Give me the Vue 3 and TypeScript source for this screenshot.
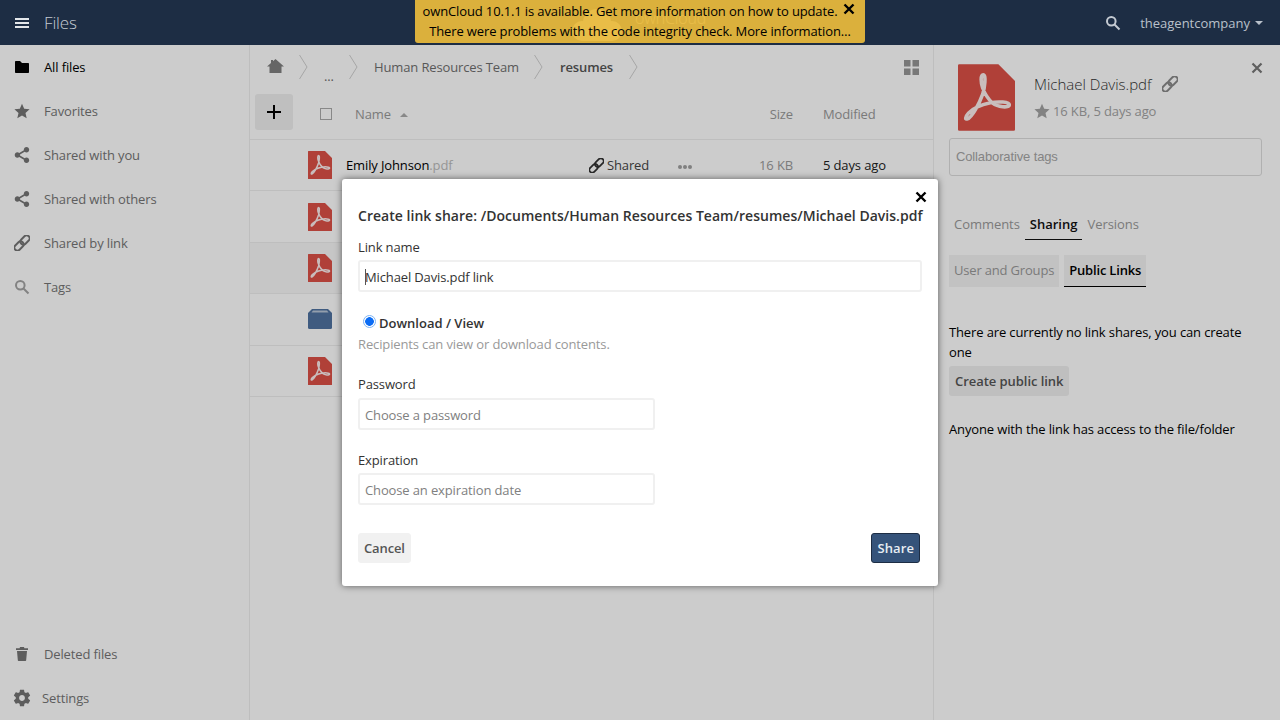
<script setup lang="ts">
const icons = {
  folder: 'M1 2.800C1 2.300 1.300 2 1.800 2H6L8 4H14.200c.5 0 .8.3.8.8V13.200c0 .5-.3.8-.8.8H1.800c-.5 0-.8-.3-.8-.8z',
  star: 'M8 .8l2.2 5 5.4.5-4.1 3.6 1.2 5.3L8 12.4l-4.7 2.8 1.2-5.3L.4 6.3l5.4-.5z',
  share:
    'M12.5 10.6c-.7 0-1.3.2-1.8.7L6 8.6c.1-.2.1-.4.1-.6s0-.4-.1-.6l4.7-2.7c.5.4 1.1.7 1.8.7C14 5.4 15.2 4.2 15.2 2.700S14 0 12.500 0 9.800 1.200 9.800 2.700c0 .2 0 .4.100.6L5.200 6c-.5-.4-1.100-.7-1.800-.7C1.900 5.300.7 6.500.7 8s1.200 2.700 2.700 2.700c.7 0 1.300-.3 1.800-.7l4.700 2.700c-.1.200-.1.400-.1.600 0 1.500 1.200 2.700 2.700 2.700s2.700-1.200 2.700-2.700-1.200-2.700-2.700-2.700z',
  trash: 'M6 1h4l.4 1.200H14V4H2V2.200h3.600zM3 5h10l-.8 9c0 .6-.5 1-1 1H4.800c-.5 0-1-.4-1-1z',
  gear: 'M19.43 12.98c.04-.32.07-.64.07-.98s-.03-.66-.07-.98l2.11-1.65c.19-.15.24-.42.12-.64l-2-3.46c-.12-.22-.39-.3-.61-.22l-2.49 1c-.52-.4-1.08-.73-1.69-.98l-.38-2.65C14.46 2.18 14.25 2 14 2h-4c-.25 0-.46.18-.49.42l-.38 2.65c-.61.25-1.17.59-1.69.98l-2.49-1c-.23-.09-.49 0-.61.22l-2 3.46c-.13.22-.07.49.12.64l2.11 1.65c-.04.32-.07.65-.07.98s.03.66.07.98l-2.11 1.65c-.19.15-.24.42-.12.64l2 3.46c.12.22.39.3.61.22l2.49-1c.52.4 1.08.73 1.69.98l.38 2.65c.03.24.24.42.49.42h4c.25 0 .46-.18.49-.42l.38-2.65c.61-.25 1.17-.59 1.69-.98l2.49 1c.23.09.49 0 .61-.22l2-3.46c.12-.22.07-.49-.12-.64l-2.11-1.65zM12 15.5c-1.93 0-3.5-1.57-3.5-3.5s1.57-3.5 3.5-3.5 3.5 1.57 3.5 3.5-1.57 3.5-3.5 3.5z',
}

const topNav = [
  { label: 'All files', icon: 'folder', active: true },
  { label: 'Favorites', icon: 'star' },
  { label: 'Shared with you', icon: 'share' },
  { label: 'Shared with others', icon: 'share' },
  { label: 'Shared by link', icon: 'link' },
  { label: 'Tags', icon: 'search' },
]

// only the first row's text is visible, the others sit behind the dialog
const rows = [
  { id: 1, kind: 'pdf' },
  { id: 2, kind: 'pdf' },
  { id: 3, kind: 'pdf', selected: true },
  { id: 4, kind: 'folder' },
  { id: 5, kind: 'pdf' },
]

const acrobat =
  'M10.6 4.400C9.400 4.400 9.600 8 10.400 10C11.400 12.800 12.600 14.600 14.600 16.400C16.600 18 21.600 18.600 21.600 17C21.600 15.800 17 15.600 13.600 16.200C9.800 17 6.400 18.400 4.400 20.600C2.800 22.400 3 23.400 4 23C5.800 22.400 9 16.600 10.400 12.600C11.200 10 12 4.400 10.600 4.400Z'
</script>

<template>
  <div class="page">
    <header class="topbar">
      <div class="brand">
        <svg class="burger" width="14" height="10" viewBox="0 0 14 10">
          <path d="M0 0h14v2H0zM0 4h14v2H0zM0 8h14v2H0z" />
        </svg>
        <span class="app-name">Files</span>
      </div>
      <div class="logo">
        <svg width="54" height="32" viewBox="0 0 54 32">
          <circle cx="27" cy="14" r="14" />
          <circle cx="12" cy="22" r="10" />
          <circle cx="42" cy="22" r="10" />
          <rect x="12" y="20" width="30" height="12" />
        </svg>
        <span>ownCloud</span>
      </div>
      <div class="notes">
        <div class="note-line">
          ownCloud 10.1.1 is available. Get more information on how to update.
          <svg class="note-close" width="12" height="12" viewBox="0 0 12 12">
            <path d="M1.500 1.500l9 9M10.500 1.500l-9 9" />
          </svg>
        </div>
        <div class="note-line">There were problems with the code integrity check. More information…</div>
      </div>
      <div class="user-area">
        <svg class="head-search" width="16" height="16" viewBox="0 0 16 16">
          <circle cx="6.300" cy="6.300" r="4.300" />
          <path d="M9.500 9.500L14.500 14.500" />
        </svg>
        <span class="user-name">theagentcompany</span>
        <span class="caret"></span>
      </div>
    </header>

    <div class="body">
      <nav class="sidebar">
        <a v-for="item in topNav" :key="item.label" class="nav-item" :class="{ active: item.active }">
          <svg v-if="item.icon === 'link'" class="nav-icon link-ic" width="16" height="16" viewBox="0 0 16 16">
            <g transform="rotate(-45 8 8)">
              <rect x="-1.500" y="5" width="10.500" height="6" rx="3" />
              <rect x="7" y="5" width="10.500" height="6" rx="3" />
            </g>
          </svg>
          <svg v-else-if="item.icon === 'search'" class="nav-icon search-ic" width="16" height="16" viewBox="0 0 16 16">
            <circle cx="6.300" cy="6.300" r="4.300" />
            <path d="M9.500 9.500L14.500 14.500" />
          </svg>
          <svg v-else class="nav-icon" width="16" height="16" viewBox="0 0 16 16">
            <path :d="icons[item.icon as keyof typeof icons]" />
          </svg>
          <span>{{ item.label }}</span>
        </a>
        <a class="nav-item bottom">
          <svg class="nav-icon" width="16" height="16" viewBox="0 0 16 16"><path :d="icons.trash" /></svg>
          <span>Deleted files</span>
        </a>
        <a class="nav-item settings">
          <svg class="nav-icon gear" width="20" height="20" viewBox="0 0 24 24"><path :d="icons.gear" /></svg>
          <span>Settings</span>
        </a>
      </nav>

      <main class="content">
        <div class="crumbs">
          <svg class="home" width="17" height="16" viewBox="0 0 17 16">
            <path d="M8.500 1L17 8.500h-2.500V15h-12V8.500H0L4 5V2h2v1.200z" />
          </svg>
          <svg class="chev c1" width="9" height="24" viewBox="0 0 9 24"><path d="M.5 0L8 12 .5 24" /></svg>
          <span class="dots-crumb">...</span>
          <svg class="chev" width="9" height="24" viewBox="0 0 9 24"><path d="M.5 0L8 12 .5 24" /></svg>
          <span class="crumb">Human Resources Team</span>
          <svg class="chev" width="9" height="24" viewBox="0 0 9 24"><path d="M.5 0L8 12 .5 24" /></svg>
          <span class="crumb current">resumes</span>
          <svg class="chev" width="9" height="24" viewBox="0 0 9 24"><path d="M.5 0L8 12 .5 24" /></svg>
          <svg class="view-toggle" width="15" height="15" viewBox="0 0 15 15">
            <path d="M0 0h6.500v6.500H0zM8.500 0H15v6.500H8.500zM0 8.500h6.500V15H0zM8.500 8.500H15V15H8.500z" />
          </svg>
        </div>

        <div class="thead">
          <button class="add" type="button">
            <svg width="14" height="14" viewBox="0 0 14 14"><path d="M6 0h2v6h6v2H8v6H6V8H0V6h6z" /></svg>
          </button>
          <span class="check"></span>
          <span class="th-name">Name<i class="sort"></i></span>
          <span class="th-size">Size</span>
          <span class="th-date">Modified</span>
        </div>

        <div v-for="row in rows" :key="row.id" class="row" :class="{ selected: row.selected }">
          <svg v-if="row.kind === 'pdf'" class="file-ic" width="24" height="28" viewBox="0 0 24 28">
            <path class="pdf-bg" d="M.5 0H17L24 7V27.500a.5.5 0 0 1-.5.5H.5a.5.5 0 0 1-.5-.5V.5A.5.5 0 0 1 .5 0z" />
            <path class="pdf-mark" :d="acrobat" />
          </svg>
          <svg v-else class="file-ic" width="24" height="20" viewBox="0 0 24 20">
            <path class="dir-bg" d="M4 0H20L24 4V18.500A1.500 1.500 0 0 1 22.500 20H1.500A1.500 1.500 0 0 1 0 18.500V4z" />
            <path class="dir-band" d="M5 1.500H19L20.500 3.500H3.500z" />
          </svg>
          <template v-if="row.id === 1">
            <span class="file-name">Emily Johnson<span class="ext">.pdf</span></span>
            <span class="shared">
              <svg class="link-ic dark" width="15" height="15" viewBox="0 0 16 16">
                <g transform="rotate(-45 8 8)">
                  <rect x="-1.500" y="5" width="10.500" height="6" rx="3" />
                  <rect x="7" y="5" width="10.500" height="6" rx="3" />
                </g>
              </svg>
              Shared
            </span>
            <span class="more"><i></i><i></i><i></i></span>
            <span class="size">16 KB</span>
            <span class="date">5 days ago</span>
          </template>
        </div>
      </main>

      <aside class="details">
        <svg class="panel-close" width="12" height="12" viewBox="0 0 12 12">
          <path d="M1.500 1.500l9 9M10.500 1.500l-9 9" />
        </svg>
        <div class="file-head">
          <svg class="big-pdf" width="57" height="67" viewBox="0 0 24 28">
            <path class="pdf-bg" d="M.5 0H17L24 7V27.500a.5.5 0 0 1-.5.5H.5a.5.5 0 0 1-.5-.5V.5A.5.5 0 0 1 .5 0z" />
            <path class="pdf-mark" :d="acrobat" />
          </svg>
          <div class="file-meta">
            <div class="file-title">
              Michael Davis.pdf
              <svg class="link-ic soft" width="16" height="16" viewBox="0 0 16 16">
                <g transform="rotate(-45 8 8)">
                  <rect x="-1.500" y="5" width="10.500" height="6" rx="3" />
                  <rect x="7" y="5" width="10.500" height="6" rx="3" />
                </g>
              </svg>
            </div>
            <div class="file-sub">
              <svg class="sub-star" width="16" height="16" viewBox="0 0 16 16"><path :d="icons.star" /></svg>
              16 KB, 5 days ago
            </div>
          </div>
        </div>
        <div class="tags-box">Collaborative tags</div>
        <div class="tabs">
          <span class="tab">Comments</span>
          <span class="tab on">Sharing</span>
          <span class="tab">Versions</span>
        </div>
        <div class="subtabs">
          <span class="subtab">User and Groups</span>
          <span class="subtab on">Public Links</span>
        </div>
        <p class="no-links">There are currently no link shares, you can create one</p>
        <button class="create" type="button">Create public link</button>
        <p class="anyone">Anyone with the link has access to the file/folder</p>
      </aside>
    </div>

    <div class="overlay">
      <div class="dialog">
        <svg class="dialog-close" width="12" height="12" viewBox="0 0 12 12">
          <path d="M1.500 1.500l9 9M10.500 1.500l-9 9" />
        </svg>
        <h3>Create link share: /Documents/Human Resources Team/resumes/Michael Davis.pdf</h3>
        <label class="lbl first">Link name</label>
        <div class="name-field">
          <input class="field wide" type="text" value="Michael Davis.pdf link" />
          <span class="text-caret"></span>
        </div>
        <label class="radio-row">
          <input type="radio" checked />
          <span>Download / View</span>
        </label>
        <p class="hint">Recipients can view or download contents.</p>
        <label class="lbl pw">Password</label>
        <input class="field short" type="text" placeholder="Choose a password" />
        <label class="lbl exp">Expiration</label>
        <input class="field short" type="text" placeholder="Choose an expiration date" />
        <div class="actions">
          <button class="cancel" type="button">Cancel</button>
          <button class="submit" type="button">Share</button>
        </div>
      </div>
    </div>
  </div>
</template>

<style>
html,
body {
  margin: 0;
  background: #fff;
}
</style>

<style scoped>
.page {
  position: relative;
  height: 720px;
  overflow: hidden;
  font-family: 'Open Sans', 'Noto Sans', sans-serif;
  font-size: 13px;
  line-height: 18px;
  letter-spacing: -0.13px;
  color: #000;
}

.topbar {
  position: relative;
  z-index: 20;
  display: flex;
  align-items: center;
  justify-content: space-between;
  height: 45px;
  background: #1d2d44;
}

.brand {
  display: flex;
  align-items: center;
  padding-left: 15px;
}

.burger {
  fill: #e3e6ea;
}

.app-name {
  margin-left: 15px;
  font-size: 17px;
  font-weight: 300;
  color: #c4cad2;
}

.logo {
  position: absolute;
  top: 9px;
  left: 570px;
  display: flex;
  gap: 11px;
  font-size: 16px;
  font-weight: 300;
  color: #fff;
}

.logo svg {
  fill: #fff;
}

.notes {
  position: absolute;
  top: 0;
  left: 50%;
  width: 450px;
  height: 43px;
  margin-left: -225px;
  padding-top: 1px;
  box-sizing: border-box;
  text-align: center;
  background: rgba(232, 185, 60, 0.94);
  border-radius: 0 0 3px 3px;
}

.note-line {
  position: relative;
  height: 20px;
  line-height: 20px;
  color: #000;
}

.note-line:first-child {
  padding-right: 20px;
}

.note-close {
  position: absolute;
  top: 2px;
  right: 10px;
  fill: none;
  stroke: #000;
  stroke-width: 2.4;
}

.user-area {
  display: flex;
  align-items: center;
  padding-right: 17px;
}

.head-search {
  fill: none;
  stroke: #c4cad2;
  stroke-width: 2;
}

.user-name {
  margin-left: 19px;
  letter-spacing: 0;
  color: #b9c0ca;
}

.caret {
  width: 0;
  height: 0;
  margin-left: 5px;
  border: 4px solid transparent;
  border-top-color: #b9c0ca;
  border-bottom: 0;
}

.body {
  display: grid;
  grid-template-columns: 250px 684px 346px;
  height: 675px;
}

.sidebar {
  display: flex;
  flex-direction: column;
  border-right: 1px solid #eee;
}

.nav-item {
  display: flex;
  align-items: center;
  flex: none;
  height: 44px;
  padding-left: 14px;
  color: #757575;
}

.nav-item span {
  margin-left: 14px;
}

.nav-item.active {
  color: #000;
}

.nav-item.bottom {
  margin-top: auto;
}

.nav-item.settings {
  padding-left: 12px;
}

.nav-item.settings span {
  margin-left: 10px;
}

.nav-icon {
  flex: none;
  fill: #757575;
}

.nav-item.active .nav-icon {
  fill: #000;
}

.nav-icon.search-ic {
  fill: none;
  stroke: #a3a3a3;
  stroke-width: 2;
}

.link-ic {
  flex: none;
  fill: none;
  stroke: #757575;
  stroke-width: 1.900;
}

.link-ic.dark {
  stroke: #333;
}

.link-ic.soft {
  stroke: #8a8a8a;
}

.content {
  min-width: 0;
  border-right: 1px solid #eee;
  box-sizing: content-box;
  width: 683px;
}

.crumbs {
  display: flex;
  align-items: center;
  height: 44px;
  padding-left: 17px;
  color: #6f6f6f;
}

.home {
  fill: #808080;
  margin-top: -2px;
}

.chev {
  flex: none;
  fill: none;
  stroke: #d0d0d0;
  margin: 0 16px 0 0;
}

.chev.c1 {
  margin-left: 15px;
}

.dots-crumb {
  width: 25px;
  margin-top: 19px;
  line-height: 1;
}

.crumb {
  margin-right: 15px;
}

.crumb.current {
  margin-left: 1px;
  margin-right: 16px;
  font-weight: 600;
  color: #555;
}

.view-toggle {
  margin-left: auto;
  margin-right: 14px;
  fill: #969696;
}

.thead {
  display: flex;
  align-items: center;
  height: 51px;
  padding-left: 5px;
  box-sizing: border-box;
  border-bottom: 1px solid #eee;
  color: #999;
}

.add {
  flex: none;
  display: flex;
  align-items: center;
  justify-content: center;
  width: 38px;
  height: 36px;
  margin-bottom: 5px;
  padding: 0;
  border: 0;
  border-radius: 3px;
  background: #efefef;
}

.check {
  flex: none;
  width: 10px;
  height: 10px;
  margin-left: 27px;
  border: 1px solid #aaa;
}

.th-name {
  flex: 1;
  margin-left: 23px;
}

.sort {
  display: inline-block;
  margin-left: 9px;
  vertical-align: 2px;
  border: 4px solid transparent;
  border-bottom-color: #aaa;
  border-top: 0;
}

.th-size {
  margin-right: 30px;
}

.th-date {
  width: 110px;
}

.row {
  display: flex;
  align-items: center;
  height: 51.400px;
  padding-left: 58px;
  box-sizing: border-box;
  border-bottom: 1px solid #eee;
}

.row.selected {
  background: #f8f8f8;
}

.file-ic {
  flex: none;
}

.pdf-bg {
  fill: #dc5047;
}

.pdf-mark {
  fill: none;
  stroke: #fff;
  stroke-width: 1.500;
  opacity: 0.9;
}

.dir-bg {
  fill: #4f72a0;
}

.dir-band {
  fill: #b8c6d8;
}

.file-name {
  flex: 1;
  margin-left: 14px;
}

.ext {
  color: #bbb;
}

.shared {
  display: flex;
  align-items: center;
  gap: 3px;
  width: 89px;
  color: #444;
}

.more {
  display: flex;
  gap: 1px;
  width: 14px;
  margin-top: 3px;
}

.more i {
  width: 4px;
  height: 4px;
  border-radius: 50%;
  background: #a0a0a0;
}

.size {
  width: 101px;
  text-align: right;
  color: #9a9a9a;
}

.date {
  width: 110px;
  margin-left: 30px;
  color: #222;
}

.details {
  position: relative;
  padding-left: 15px;
  padding-right: 18px;
}

.panel-close {
  position: absolute;
  top: 17px;
  right: 17px;
  fill: none;
  stroke: #777;
  stroke-width: 2.200;
}

.file-head {
  display: flex;
  padding: 19px 0 0 9px;
  height: 74px;
}

.big-pdf {
  flex: none;
}

.file-meta {
  margin-left: 19px;
  margin-top: 11px;
}

.file-title {
  display: flex;
  align-items: center;
  gap: 10px;
  font-size: 15px;
  line-height: 18px;
  font-weight: 300;
  letter-spacing: 0;
  color: #333;
}

.file-sub {
  display: flex;
  align-items: center;
  gap: 3px;
  margin-top: 9px;
  color: #a3a3a3;
}

.sub-star {
  fill: #a3a3a3;
}

.tags-box {
  height: 38px;
  box-sizing: border-box;
  padding-left: 6px;
  line-height: 36px;
  font-family: 'Liberation Sans', Arial, sans-serif;
  color: #a5a5a5;
  border: 1px solid #ddd;
  border-radius: 3px;
}

.tabs {
  display: flex;
  margin-top: 39px;
  letter-spacing: -0.05px;
  color: #999;
}

.tab {
  padding: 0 5px 6px;
}

.tab.on {
  font-weight: 600;
  letter-spacing: 0;
  color: #111;
  border-bottom: 1px solid #111;
}

.subtabs {
  display: flex;
  gap: 5px;
  margin-top: 15px;
}

.subtab {
  height: 32px;
  padding: 0 5px;
  box-sizing: border-box;
  line-height: 31px;
  letter-spacing: -0.18px;
  color: #999;
  background: #f3f3f3;
}

.subtab.on {
  font-weight: 600;
  color: #000;
  border-bottom: 1px solid #000;
}

.no-links {
  margin: 35px 0 0;
  line-height: 20px;
}

.create {
  display: block;
  height: 30px;
  margin-top: 4px;
  padding: 0 6px;
  font: 600 13px 'Open Sans', sans-serif;
  letter-spacing: -0.05px;
  color: #555;
  background: #efefef;
  border: 0;
  border-radius: 3px;
}

.anyone {
  margin: 24px 0 0;
}

.overlay {
  position: absolute;
  inset: 0;
  z-index: 10;
  display: flex;
  justify-content: center;
  align-items: flex-start;
  padding-top: 179px;
  box-sizing: border-box;
  background: rgba(0, 0, 0, 0.2);
}

.dialog {
  position: relative;
  display: flex;
  flex-direction: column;
  align-items: flex-start;
  width: 596px;
  height: 407px;
  padding: 28px 16px 0;
  box-sizing: border-box;
  background: #fff;
  border-radius: 3px;
  box-shadow: 0 0 7px rgba(0, 0, 0, 0.55);
  color: #333;
}

.dialog-close {
  position: absolute;
  top: 12px;
  right: 11px;
  fill: none;
  stroke: #000;
  stroke-width: 2.400;
}

h3 {
  margin: 0;
  font-size: 14px;
  line-height: 18px;
  font-weight: 600;
  letter-spacing: 0.03px;
  white-space: nowrap;
}

.lbl {
  display: block;
}

.lbl.first {
  margin-top: 13px;
}

.lbl.pw {
  margin-top: 22px;
  margin-bottom: 5px;
}

.lbl.exp {
  margin-top: 21px;
}

.name-field {
  position: relative;
  margin-top: 4px;
}

.field {
  display: block;
  height: 32px;
  padding: 2px 6px 0;
  box-sizing: border-box;
  font: 13px 'Open Sans', sans-serif;
  letter-spacing: -0.13px;
  color: #333;
  background: #fff;
  border: 2px solid #f0f0f0;
  border-radius: 3px;
  outline: 0;
}

.field::placeholder {
  color: #808080;
  opacity: 1;
}

.field.wide {
  width: 564px;
  padding-left: 5px;
}

.field.short {
  width: 297px;
  padding-left: 5px;
}

.lbl.exp + .field {
  margin-top: 4px;
}

.text-caret {
  position: absolute;
  top: 9px;
  left: 7px;
  width: 1px;
  height: 16px;
  background: #555;
}

.radio-row {
  display: flex;
  align-items: center;
  height: 18px;
  margin-top: 22px;
  font-weight: 600;
  letter-spacing: 0;
}

.radio-row input {
  appearance: none;
  flex: none;
  width: 13px;
  height: 13px;
  margin: -4px 3px 0 5px;
  box-sizing: border-box;
  border: 1.500px solid #7db4f5;
  border-radius: 50%;
  background: radial-gradient(circle, #0b6cf5 0 4px, #fff 4.600px);
}

.hint {
  margin: 3px 0 0;
  color: #999;
}

.actions {
  display: flex;
  justify-content: space-between;
  align-self: stretch;
  margin-top: 28px;
  padding-right: 2px;
}

.actions button {
  height: 30px;
  padding: 0 6px;
  font: 600 13px 'Open Sans', sans-serif;
  letter-spacing: -0.13px;
  border-radius: 3px;
}

.actions .cancel {
  padding: 0 5px;
  color: #555;
  background: #f1f1f1;
  border: 1px solid #f1f1f1;
}

.actions .submit {
  padding: 0 5px;
  letter-spacing: 0.1px;
  color: #e8edf3;
  background: #35537a;
  border: 1px solid #1d2d44;
}
</style>
